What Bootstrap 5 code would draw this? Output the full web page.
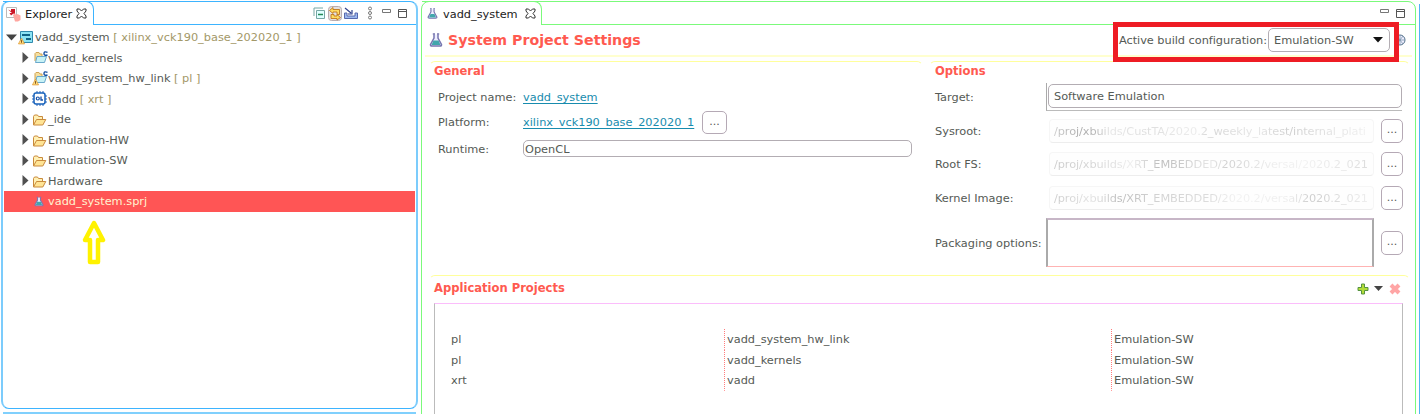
<!DOCTYPE html>
<html lang="en">
<head>
<meta charset="utf-8">
<title>vadd_system</title>
<link href="https://cdn.jsdelivr.net/npm/bootstrap@5.3.0/dist/css/bootstrap.min.css" rel="stylesheet">
<style>
body{font:11.33px/14px "DejaVu Sans",sans-serif;color:#555a55;background:#fff;height:414px;overflow:hidden}
svg{display:block;flex:none}
.explorer{width:417px;height:408px;margin:1px 0 0 1px;border:2px solid #7cccfc;border-top:1px solid #3db4ff;border-bottom:1px solid #3db4ff;border-radius:8px}
.leftcol{width:421px}
.leftcol,.editor,.edge{flex:none}
.nextpane{margin:3px 0 0 3px;width:413px;height:3px;background:#80d0fd}
.editor{width:995px;height:430px;margin-top:1px;border:1px solid #7bfa7b;border-radius:8px 8px 0 0}
.tabbar{height:23px}
.ptab{color:#222;border-right:1px solid;border-top:1px solid;border-radius:0 8px 0 0;margin-top:-1px;height:24px}
.tools{border-bottom:1px solid}
.blue .ptab,.blue .tools{border-color:#3db4ff}
.green .ptab,.green .tools{border-color:#7bfa7b}
.tree{padding-top:2px}
.trow{height:20.5px;white-space:pre}
.trow.kid{padding-left:17px}
.tag{color:#a39868}
.sel{background:#f55;color:#fff3d0;margin:0 1px 0 1px}
.uparrow{margin:8px 0 0 79px}
.fhead{height:32px;border-bottom:2px solid #ffffcf;margin:0 3px 0 3px}
.ftitle{font-size:14.2px;font-weight:700;color:#ff5a50}
.sect{border:1px solid transparent;border-top-color:#ffff9c;border-radius:6px 6px 0 0}
.stitle{font-weight:700;color:#ff5a50;font-size:11.55px}
a.lk{color:#188cae;text-decoration:underline;text-underline-offset:2px}
.fld{border:1px solid #b3adb3;border-radius:5px;background:#fff}
.dots{width:22px;height:24px;border:1px solid #b5a9b5;border-radius:5px;font-size:11px;background:#fff;padding-bottom:1px}
.dots.opt{margin-left:6px}
.mark-box{position:absolute;left:-6px;top:-6px;width:286px;height:40px;border:5px solid #ee1c24}
.combo{width:122px;height:24px;padding:0 6px 0 5px}
.opts{display:grid;grid-template-columns:111px 329px 1fr;grid-template-rows:33.8px 33.8px 33.8px 33.8px 55px;align-items:center;width:470px}
.target{grid-column:2/4;width:356px;height:28px;border-left:1px solid #aaa;border-bottom:1px solid #bbb;padding:1px 0 0 1px}
.faded{width:325px;height:24px;border:1px solid #f6f6f6;border-bottom-color:#ededed;border-radius:4px;margin-left:3px;padding-left:4px;background:#fefefe;white-space:nowrap;overflow:hidden}
.faded span{background:linear-gradient(90deg,#ccc 0,#aaa 9%,#bbb 14%,#e6e6e6 18%,#dedede 30%,#ececec 45%,#d5d5d5 50%,#e6e6e6 65%,#ccc 76%,#ddd 84%,#f0f0f0 100%);-webkit-background-clip:text;background-clip:text;color:transparent;letter-spacing:-.09px}
.faded.b span{background-image:linear-gradient(90deg,#ccc 0,#d8d8d8 15%,#eee 25%,#bbb 34%,#ccc 41%,#e6e6e6 50%,#d0d0d0 55%,#eee 70%,#f2f2f2 80%,#ddd 100%)}
.faded.c span{background-image:linear-gradient(90deg,#ccc 0,#e4e4e4 12%,#bbb 21%,#d0d0d0 30%,#ddd 50%,#f2f2f2 58%,#eee 75%,#ccc 82%,#eee 100%)}
.pack{width:328px;height:49px;border:2px solid #aaa;border-top-color:#c7b6c7;border-bottom:1px solid #ffb3b3}
.apps{margin-left:4px;height:130px;border:1px solid #bbb;border-top:1px solid #fbbdfb;padding-top:25px;width:969px}
.arow{height:20.5px}
.arow>div{height:100%;line-height:20px}
.c1{width:275px;padding-left:16px}
.c2,.c3{padding-left:3px;margin-left:14px;background:repeating-linear-gradient(#ff7c7c 0 1px,#fff 1px 2px) left/1px 100% no-repeat}
.c2{width:373px}
.edge{width:2px;height:410px;margin:4px 0 0 3px;background:#50b4f4}
</style>
</head>
<body>
<svg width="0" height="0" class="position-absolute">
<defs>
<symbol id="close" viewBox="0 0 11 11"><path d="M1 1H3.500L5.500 3 7.500 1H10V3L8 5.500 10 8V10H7.500L5.500 8 3.500 10H1V8L3 5.500 1 3Z" fill="#fff" stroke="#333"/></symbol>
<symbol id="flask" viewBox="0 0 14 14"><path d="M5 1.500V5L1.500 11.500Q1.200 13 3 13H11Q12.800 13 12.500 11.500L9 5V1.500" fill="#eef" stroke="#7775b0" stroke-width="1.500"/><path d="M4.500 7.500H9.500L11.500 12H2.500Z" fill="#42a6ac"/><path d="M3.800 1H6M8 1H10.200" stroke="#7775b0" stroke-width="1.300"/></symbol>
<symbol id="right" viewBox="0 0 7 11"><path d="M.5 0L6.500 5.500 .5 11Z" fill="#505050"/></symbol>
<symbol id="folder" viewBox="0 0 14 12"><path d="M1 11V2.500L2 1H5L6 2.500H10V5" fill="#fff0b4" stroke="#c98a3c"/><path d="M1 11L4 5.500H13.300L10.300 11Z" fill="#ffe494" stroke="#c98a3c"/></symbol>
<symbol id="cfolder" viewBox="0 0 14 13"><path d="M1 10V2.500L2 1.500H5L6 3H8V5" fill="#f5dfa0" stroke="#d1a453"/><path d="M1.500 11.500L3 5.500H12.500L10.500 11.500Z" fill="#c8f2f5" stroke="#6aa9cc"/><path d="M13.500 1.300Q10 0 10 2.500T13.500 4" fill="none" stroke="#164f9f" stroke-width="1.400"/></symbol>
<symbol id="warn" viewBox="0 0 8 8"><path d="M4 .8L7.500 7.300H.5Z" fill="#ffdf82" stroke="#e09a35" stroke-width=".9"/><path d="M4 3V6" stroke="#714410"/></symbol>
<symbol id="minmax" viewBox="0 0 28 12"><path d="M2.500 2.500H10.500V5.500H2.500Z" fill="#fff" stroke="#777"/><path d="M18.500 2.500H26.500V10.500H18.500ZM18.500 4.500H26.500" fill="#fff" stroke="#555"/></symbol>
</defs>
</svg>
<main class="d-flex">
<div class="leftcol">
<section class="explorer blue">
<div class="tabbar d-flex">
<div class="ptab d-flex align-items-center" style="width:91px">
<svg style="margin-left:3px" width="15" height="16"><path d="M.5 1.500H10.500V11.500H.5Z" fill="#fff" stroke="#bbb"/><path d="M2 3.500L5 5V3H9V9L7.500 7.500 5 9.500 3.500 7H6Z" fill="#cc1425"/><path d="M7 9L9 7 10 9 11.500 8 14.500 9.500V14L12 15.500H9Z" fill="#ffa6a0"/></svg>
<span style="margin-left:4px;width:47px">Explorer</span><svg style="margin-left:4px" width="11" height="11"><use href="#close"/></svg>
</div>
<div class="tools flex-grow-1 d-flex align-items-center justify-content-end" style="padding-right:8px">
<svg width="12" height="13"><path d="M1 9V1H10" fill="none" stroke="#77a8a5"/><path d="M3.500 3.500H11.500V11.500H3.500Z" fill="#e0ffff" stroke="#75a6a4"/><path d="M5 7.500H10" stroke="#285" stroke-width="1.500"/></svg>
<svg style="margin:0 1px 0 3px" width="14" height="15"><rect x=".5" y=".5" width="13" height="14" rx="3" fill="#e4e0e0" stroke="#b8adb0"/><path d="M1.500 4.500L5 1.500V3.500H11.500V8.500H9V6H5V7.500Z" fill="#ffdc62" stroke="#c0771c" stroke-width=".9"/><path d="M12.500 11.500L9 14V12.500H3V8.500H6V10H9V8.500Z" fill="#ffdc62" stroke="#c0771c" stroke-width=".9"/></svg>
<svg width="16" height="14"><path d="M1.500 7V12.500H14.500V7H12V10H4V7Z" fill="#9db9ee" stroke="#5868ad"/><path d="M2 2L8 7M9 4V8H5" stroke="#33438e" fill="none" stroke-width="1.200"/></svg>
<svg style="margin-left:8px;margin-right:7px" width="6" height="14" fill="#fff" stroke="#777"><circle cx="3" cy="2.500" r="1.500"/><circle cx="3" cy="7" r="1.500"/><circle cx="3" cy="11.500" r="1.500"/></svg>
<svg width="28" height="12"><use href="#minmax"/></svg>
</div>
</div>
<div class="tree">
<div class="trow d-flex align-items-center"><svg style="margin-left:3px" width="12" height="7"><path d="M0 .5H11L5.500 6.500Z" fill="#444"/></svg><svg width="15" height="16"><path d="M2.500 2.500H14.500V13.500H2.500Z" fill="#8de4f4" stroke="#3089ad"/><path d="M4 5H12V7H4ZM8 9H13V11H8Z" fill="#116487"/><use href="#warn" x="0" y="8" width="7" height="8"/></svg><span style="margin-left:2px">vadd_system<span class="tag"> [ xilinx_vck190_base_202020_1 ]</span></span></div>
<div class="trow kid d-flex align-items-center"><svg style="margin:0 5px 0 2px" width="7" height="11"><use href="#right"/></svg><svg width="14" height="13"><use href="#cfolder"/></svg><span>vadd_kernels</span></div>
<div class="trow kid d-flex align-items-center"><svg style="margin:0 3px 0 2px" width="7" height="11"><use href="#right"/></svg><svg width="16" height="15"><use href="#cfolder" x="2" width="14" height="13"/><use href="#warn" x="0" y="7" width="7" height="8"/></svg><span>vadd_system_hw_link<span class="tag"> [ pl ]</span></span></div>
<div class="trow kid d-flex align-items-center"><svg style="margin:0 3px 0 2px" width="7" height="11"><use href="#right"/></svg><svg style="margin-right:1px" width="15" height="15"><path d="M5 0V15M8 0V15M11 0V15M0 5H15M0 8H15M0 11H15" stroke="#2867bd"/><rect x="2" y="2" width="11" height="11" rx="2" fill="#fff" stroke="#1762bb" stroke-width="1.500"/><circle cx="5.800" cy="7.500" r="1.500" fill="none" stroke="#1550a8" stroke-width="1.200"/><path d="M9 5.500V9H11" fill="none" stroke="#1550a8" stroke-width="1.300"/></svg><span>vadd<span class="tag"> [ xrt ]</span></span></div>
<div class="trow kid d-flex align-items-center"><svg style="margin:0 3px 0 2px" width="7" height="11"><use href="#right"/></svg><svg style="margin:2px 1px 0 0" width="15" height="12"><use href="#folder"/></svg><span>_ide</span></div>
<div class="trow kid d-flex align-items-center"><svg style="margin:0 3px 0 2px" width="7" height="11"><use href="#right"/></svg><svg style="margin:2px 1px 0 0" width="15" height="12"><use href="#folder"/></svg><span>Emulation-HW</span></div>
<div class="trow kid d-flex align-items-center"><svg style="margin:0 3px 0 2px" width="7" height="11"><use href="#right"/></svg><svg style="margin:2px 1px 0 0" width="15" height="12"><use href="#folder"/></svg><span>Emulation-SW</span></div>
<div class="trow kid d-flex align-items-center"><svg style="margin:0 3px 0 2px" width="7" height="11"><use href="#right"/></svg><svg style="margin:2px 1px 0 0" width="15" height="12"><use href="#folder"/></svg><span>Hardware</span></div>
<div class="trow sel d-flex align-items-center"><svg style="margin:0 4px 0 30px" width="10" height="11"><use href="#flask"/></svg><span>vadd_system.sprj</span></div>
<svg class="uparrow" width="24" height="46"><path d="M12 3L21 20H16V42H8V20H3Z" fill="#fff" stroke="#fff200" stroke-width="4.500" stroke-linejoin="round"/></svg>
</div>
</section>
<div class="nextpane"></div>
</div>
<section class="editor green">
<div class="tabbar d-flex">
<div class="ptab d-flex align-items-center" style="width:120px"><svg style="margin-left:5px" width="11" height="11"><use href="#flask"/></svg><span style="margin-left:5px;width:76px">vadd_system</span><svg style="margin-left:6px" width="11" height="11"><use href="#close"/></svg></div>
<div class="tools flex-grow-1 d-flex align-items-center justify-content-end" style="padding-right:9px"><svg width="28" height="12"><use href="#minmax"/></svg></div>
</div>
<div class="fhead d-flex align-items-center">
<svg style="margin-left:4px" width="14" height="14"><use href="#flask"/></svg><span class="ftitle" style="margin-left:5px">System Project Settings</span>
<div class="position-relative d-flex align-items-center ms-auto"><span class="text-nowrap" style="width:149px;letter-spacing:-.04px">Active build configuration:</span>
<div class="fld combo d-flex align-items-center justify-content-between">Emulation-SW<svg width="10" height="6"><path d="M0 0H10L5 5.500Z" fill="#111"/></svg></div>
<svg style="margin-left:4px;margin-right:6px" width="12" height="12"><circle cx="6" cy="6" r="5" fill="#eef" stroke="#54718b"/><path d="M1 6H11M6 1V11M3 2L9 10M9 2L3 10" stroke="#7d97ad" stroke-width=".8"/></svg>
<div class="mark-box"></div></div>
</div>
<div class="d-flex" style="margin:4px 5px 0 7px;height:214px">
<div class="sect" style="width:494px;padding-left:4px;margin-right:6px">
<div class="stitle" style="margin-top:2px">General</div>
<div class="d-flex align-items-center" style="height:24px;margin-top:7px;padding-left:4px"><span style="width:85px">Project name:</span><a class="lk" href="#">vadd_system</a></div>
<div class="d-flex align-items-center" style="height:26px;padding-left:4px"><span style="width:85px">Platform:</span><a class="lk" href="#" style="width:171px">xilinx_vck190_base_202020_1</a><span class="dots d-flex align-items-center justify-content-center" style="margin-left:8px;width:25px;height:23px">...</span></div>
<div class="d-flex align-items-center" style="height:27px;padding-left:4px"><span style="width:85px">Runtime:</span><div class="fld d-flex align-items-center" style="width:389px;height:17px;padding-left:1px">OpenCL</div></div>
</div>
<div class="sect flex-grow-1" style="padding-left:5px">
<div class="stitle" style="margin-top:2px">Options</div>
<div class="opts" style="margin-top:2px">
<span>Target:</span><div class="target"><div class="fld d-flex align-items-center" style="width:354px;height:24px;padding-left:5px">Software Emulation</div></div>
<span>Sysroot:</span><div class="faded d-flex align-items-center"><span>/proj/xbuilds/CustTA/2020.2_weekly_latest/internal_plati</span></div><span class="dots opt d-flex align-items-center justify-content-center">...</span>
<span>Root FS:</span><div class="faded b d-flex align-items-center"><span>/proj/xbuilds/XRT_EMBEDDED/2020.2/versal/2020.2_021</span></div><span class="dots opt d-flex align-items-center justify-content-center">...</span>
<span>Kernel Image:</span><div class="faded c d-flex align-items-center"><span>/proj/xbuilds/XRT_EMBEDDED/2020.2/versal/2020.2_021</span></div><span class="dots opt d-flex align-items-center justify-content-center">...</span>
<span class="text-nowrap">Packaging options:</span><div class="pack"></div><span class="dots opt d-flex align-items-center justify-content-center">...</span>
</div></div></div>
<div class="sect" style="margin:0 5px 0 7px">
<div class="d-flex align-items-center" style="height:27px;padding:0 0 4px 4px"><span class="stitle">Application Projects</span>
<span class="ms-auto d-flex align-items-center" style="padding:2px 8px 0 0"><svg width="12" height="12"><path d="M4.500 1H7.500V4.500H11V7.500H7.500V11H4.500V7.500H1V4.500H4.500Z" fill="#b3dc39" stroke="#569340"/></svg><svg style="margin:0 6px 0 5px" width="9" height="5"><path d="M0 0H9L4.500 5Z" fill="#444"/></svg><svg width="12" height="12"><path d="M2 2L10 10M10 2L2 10" stroke="#ffa5a5" stroke-width="4"/></svg></span></div>
<div class="apps">
<div class="arow d-flex"><div class="c1">pl</div><div class="c2">vadd_system_hw_link</div><div class="c3">Emulation-SW</div></div>
<div class="arow d-flex"><div class="c1">pl</div><div class="c2">vadd_kernels</div><div class="c3">Emulation-SW</div></div>
<div class="arow d-flex"><div class="c1">xrt</div><div class="c2">vadd</div><div class="c3">Emulation-SW</div></div>
</div></div>
</section>
<div class="edge"></div>
</main>
<script src="https://cdn.jsdelivr.net/npm/bootstrap@5.3.0/dist/js/bootstrap.bundle.min.js"></script>
</body>
</html>
